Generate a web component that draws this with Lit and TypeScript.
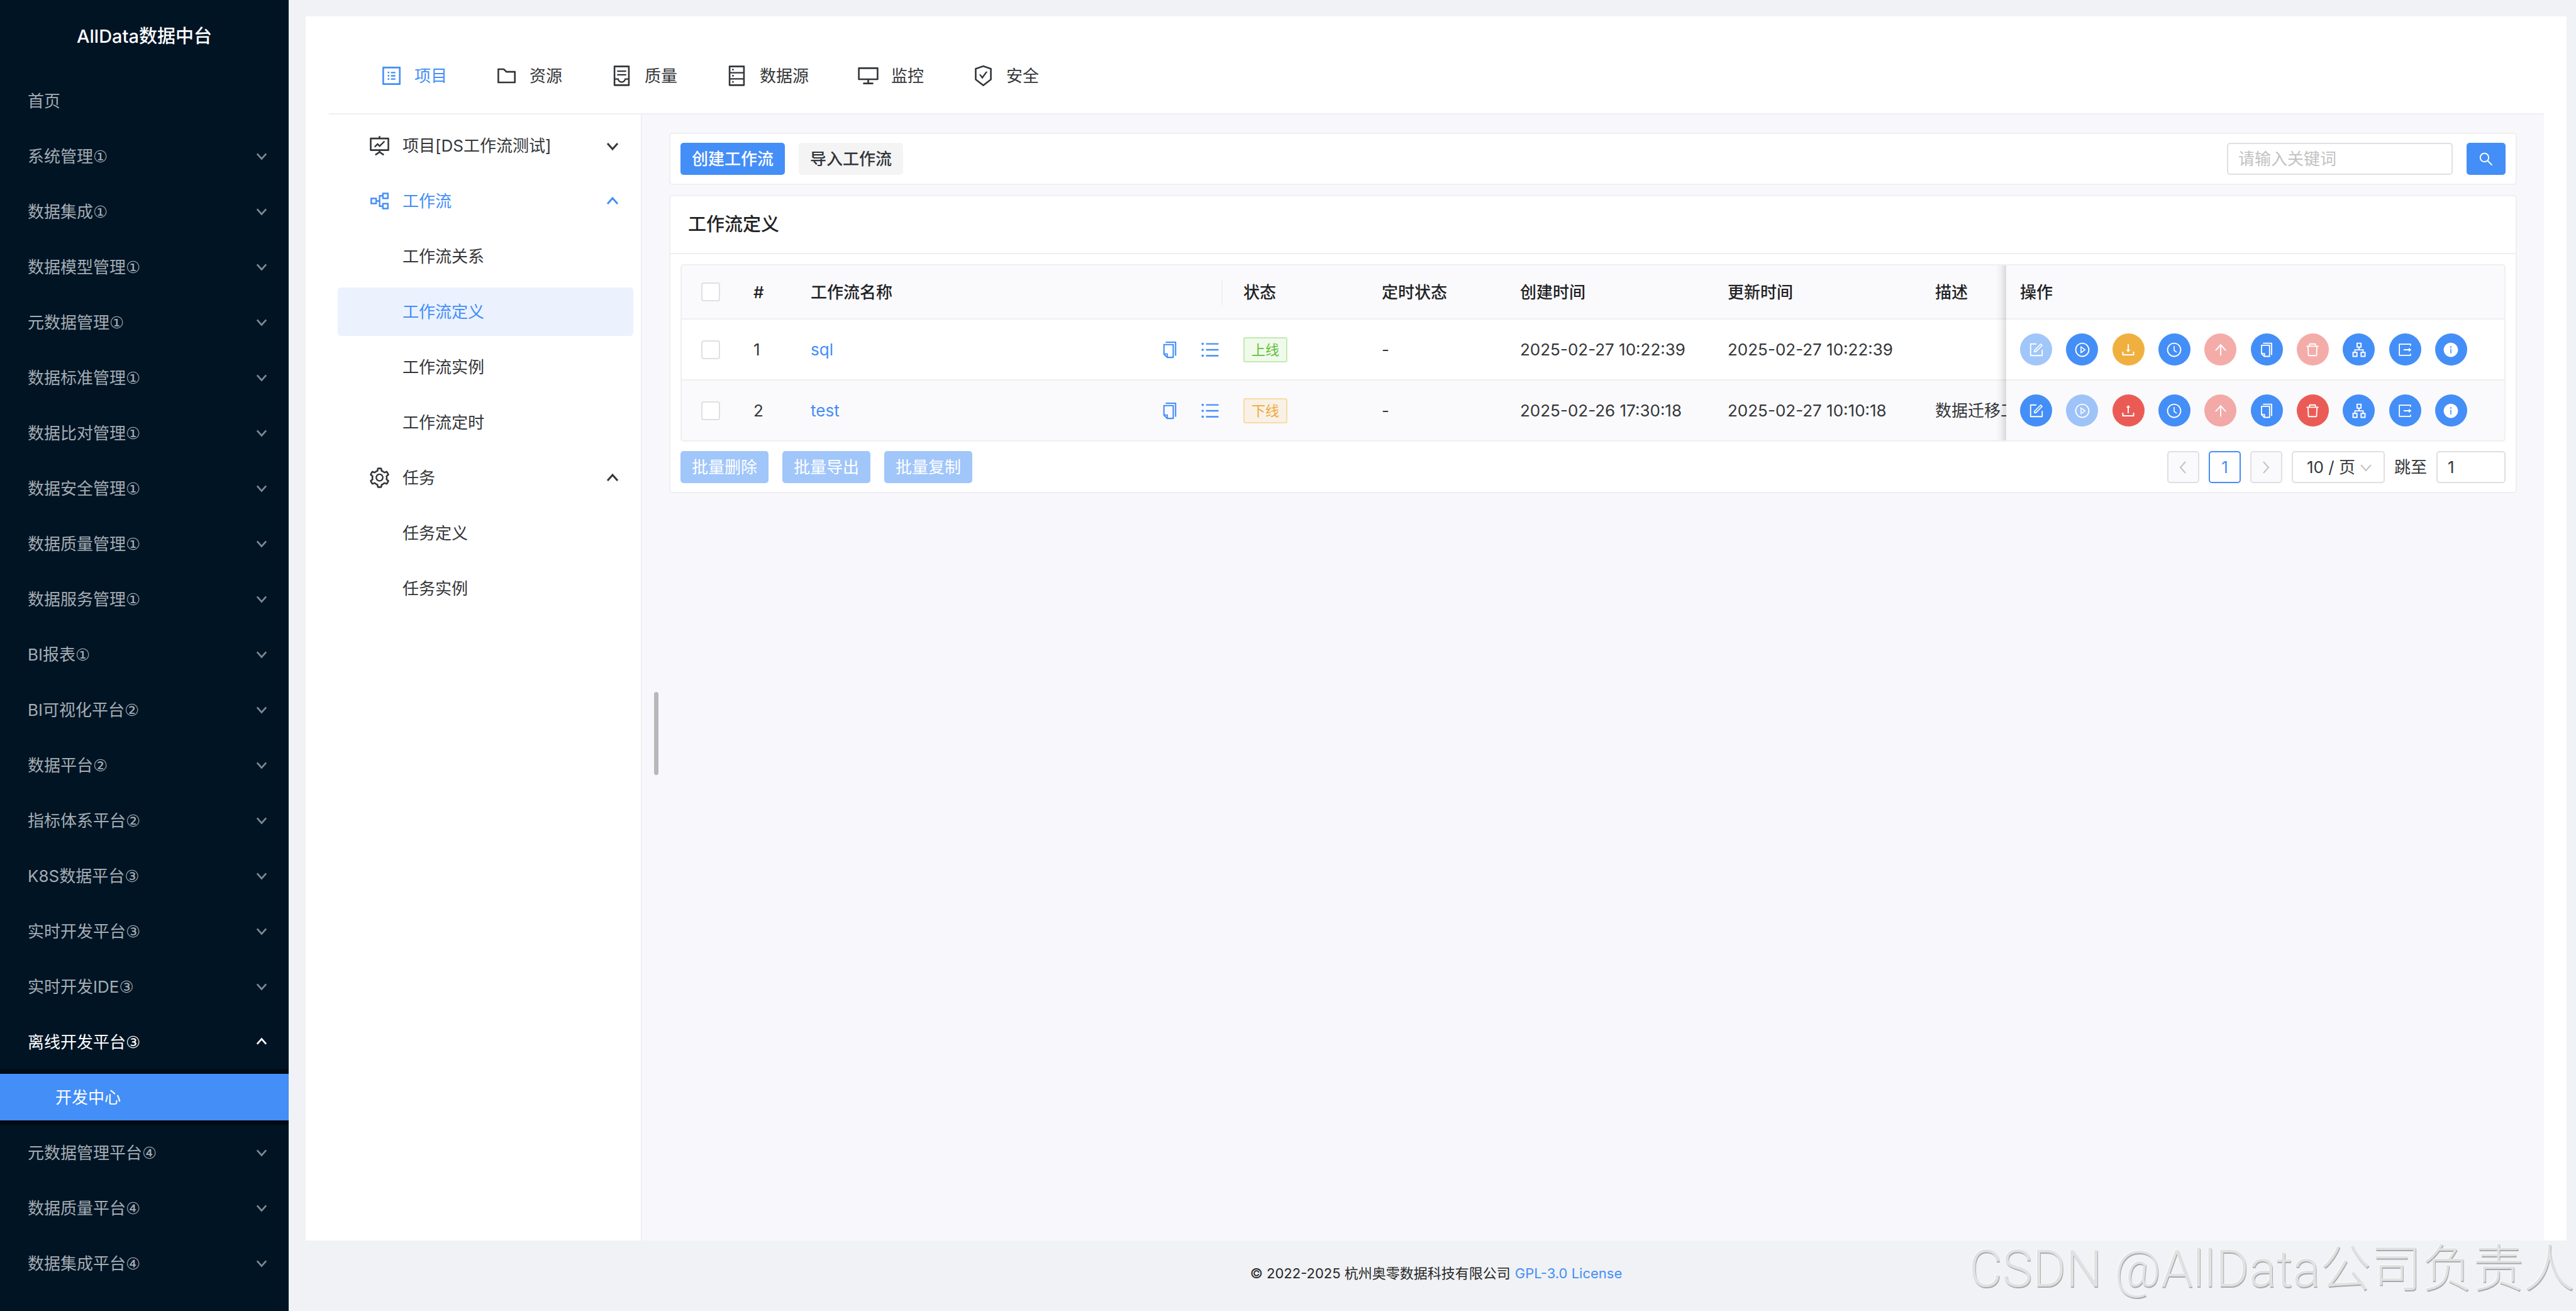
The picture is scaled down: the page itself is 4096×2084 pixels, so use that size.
import { LitElement, html, css, svg } from "lit";
import { customElement, property, state } from "lit/decorators.js";
import { classMap } from "lit/directives/class-map.js";

const CIRCLE =
  "M512 64C264.6 64 64 264.6 64 512s200.6 448 448 448 448-200.6 448-448S759.4 64 512 64zm0 820c-205.4 0-372-166.6-372-372s166.6-372 372-372 372 166.6 372 372-166.6 372-372 372z";
const TRAY =
  "M878 626h-60c-4.4 0-8 3.6-8 8v154H214V634c0-4.4-3.6-8-8-8h-60c-4.4 0-8 3.6-8 8v198c0 17.7 14.3 32 32 32h684c17.7 0 32-14.3 32-32V634c0-4.4-3.6-8-8-8z";

const ICONS: Record<string, string> = {
  profile:
    "M880 112H144c-17.7 0-32 14.3-32 32v736c0 17.7 14.3 32 32 32h736c17.7 0 32-14.3 32-32V144c0-17.7-14.3-32-32-32zm-40 728H184V184h656v656zM492 400h184c4.4 0 8-3.6 8-8v-48c0-4.4-3.6-8-8-8H492c-4.4 0-8 3.6-8 8v48c0 4.4 3.6 8 8 8zm0 144h184c4.4 0 8-3.6 8-8v-48c0-4.4-3.6-8-8-8H492c-4.4 0-8 3.6-8 8v48c0 4.4 3.6 8 8 8zm0 144h184c4.4 0 8-3.6 8-8v-48c0-4.4-3.6-8-8-8H492c-4.4 0-8 3.6-8 8v48c0 4.4 3.6 8 8 8zM340 368a40 40 0 1080 0 40 40 0 10-80 0zm0 144a40 40 0 1080 0 40 40 0 10-80 0zm0 144a40 40 0 1080 0 40 40 0 10-80 0z",
  folder:
    "M880 298.4H521L403.7 186.2a8.15 8.15 0 00-5.5-2.2H144c-17.7 0-32 14.3-32 32v592c0 17.7 14.3 32 32 32h736c17.7 0 32-14.3 32-32V330.4c0-17.7-14.3-32-32-32zM840 768H184V256h188.5l119.6 114.4H840V768z",
  container:
    "M832 64H192c-17.7 0-32 14.3-32 32v832c0 17.7 14.3 32 32 32h640c17.7 0 32-14.3 32-32V96c0-17.7-14.3-32-32-32zm-40 824H232V687h97.9c11.6 32.8 32 62.3 59.1 84.7 34.5 28.5 78.2 44.3 123 44.3s88.5-15.7 123-44.3c27.1-22.4 47.5-51.9 59.1-84.7H792v201zm0-264H643.6l-5.2 24.7C626.4 708.5 573.2 752 512 752s-114.4-43.5-126.5-103.3l-5.2-24.7H232V136h560v488zM320 341h384c4.4 0 8-3.6 8-8v-48c0-4.4-3.6-8-8-8H320c-4.4 0-8 3.6-8 8v48c0 4.4 3.6 8 8 8zm0 160h384c4.4 0 8-3.6 8-8v-48c0-4.4-3.6-8-8-8H320c-4.4 0-8 3.6-8 8v48c0 4.4 3.6 8 8 8z",
  database:
    "M832 64H192c-17.7 0-32 14.3-32 32v832c0 17.7 14.3 32 32 32h640c17.7 0 32-14.3 32-32V96c0-17.7-14.3-32-32-32zm-600 72h560v208H232V136zm560 480H232V408h560v208zm0 272H232V680h560v208zM304 240a40 40 0 1080 0 40 40 0 10-80 0zm0 272a40 40 0 1080 0 40 40 0 10-80 0zm0 272a40 40 0 1080 0 40 40 0 10-80 0z",
  desktop:
    "M928 140H96c-17.7 0-32 14.3-32 32v496c0 17.7 14.3 32 32 32h380v112H304c-8.8 0-16 7.2-16 16v48c0 4.4 3.6 8 8 8h432c4.4 0 8-3.6 8-8v-48c0-8.8-7.2-16-16-16H548V700h380c17.7 0 32-14.3 32-32V172c0-17.7-14.3-32-32-32zm-40 488H136V212h752v416z",
  safety:
    "M866.9 169.9L527.1 54.1C523 52.7 517.5 52 512 52s-11 .7-15.1 2.1L157.1 169.9c-8.3 2.8-15.1 12.4-15.1 21.2v482.4c0 8.8 5.7 20.4 12.6 25.9L499.3 968c3.5 2.7 8 4.1 12.6 4.1s9.2-1.4 12.6-4.1l344.7-268.6c6.9-5.4 12.6-17 12.6-25.9V191.1c.2-8.8-6.6-18.3-14.9-21.2zM810 654.3L512 886.5 214 654.3V226.7l298-101.6 298 101.6v427.6zm-405.8-201c-3-4.1-7.8-6.6-13-6.6H336c-6.5 0-10.3 7.4-6.5 12.7l126.4 174a16.1 16.1 0 0026 0l212.6-292.7c3.8-5.3 0-12.7-6.5-12.7h-55.2c-5.1 0-10 2.5-13 6.6L468.9 542.4l-64.7-89.1z",
  projection:
    "M312.1 591.5c3.1 3.1 8.2 3.1 11.3 0l101.8-101.8 86.1 86.2c3.1 3.1 8.2 3.1 11.3 0l226.3-226.5c3.1-3.1 3.1-8.2 0-11.3l-36.8-36.8a8.03 8.03 0 00-11.3 0L517 485.3l-86.1-86.2a8.03 8.03 0 00-11.3 0L275.3 543.4a8.03 8.03 0 000 11.3l36.8 36.8zM904 160H548V96c0-4.4-3.6-8-8-8h-56c-4.4 0-8 3.6-8 8v64H120c-17.7 0-32 14.3-32 32v520c0 17.7 14.3 32 32 32h356.4v32L311.6 884.1a7.92 7.92 0 00-2.3 11l30.3 47.2v.1c2.4 3.7 7.4 4.7 11.1 2.3L512 838.9l161.3 105.8c3.7 2.4 8.7 1.4 11.1-2.3v-.1l30.3-47.2a8 8 0 00-2.3-11L548 776.3V744h356c17.7 0 32-14.3 32-32V192c0-17.7-14.3-32-32-32zm-40 512H160V232h704v440z",
  partition:
    "M640.6 429.8h257.1c7.9 0 14.3-6.4 14.3-14.3V158.3c0-7.9-6.4-14.3-14.3-14.3H640.6c-7.9 0-14.3 6.4-14.3 14.3v92.9H490.6c-3.9 0-7.1 3.2-7.1 7.1v221.5h-85.7v-96.5c0-7.9-6.4-14.3-14.3-14.3H126.3c-7.9 0-14.3 6.4-14.3 14.3v257.2c0 7.9 6.4 14.3 14.3 14.3h257.1c7.9 0 14.3-6.4 14.3-14.3V544h85.7v221.5c0 3.9 3.2 7.1 7.1 7.1h135.7v92.9c0 7.9 6.4 14.3 14.3 14.3h257.1c7.9 0 14.3-6.4 14.3-14.3v-257c0-7.9-6.4-14.3-14.3-14.3h-257c-7.9 0-14.3 6.4-14.3 14.3v100h-78.6v-393h78.6v100c0 7.9 6.4 14.3 14.3 14.3zm53.5-217.9h150V362h-150V211.9zM329.9 587h-150V437h150v150zm364.2 75.1h150v150.1h-150V662.1z",
  setting:
    "M924.8 625.7l-65.5-56c3.1-19 4.7-38.4 4.7-57.8s-1.6-38.8-4.7-57.8l65.5-56a32.03 32.03 0 009.3-35.2l-.9-2.6a443.74 443.74 0 00-79.7-137.9l-1.8-2.1a32.12 32.12 0 00-35.1-9.5l-81.3 28.9c-30-24.6-63.5-44-99.7-57.6l-15.7-85a32.05 32.05 0 00-25.8-25.7l-2.7-.5c-52.1-9.4-106.9-9.4-159 0l-2.7.5a32.05 32.05 0 00-25.8 25.7l-15.8 85.4a351.86 351.86 0 00-99 57.4l-81.9-29.1a32 32 0 00-35.1 9.5l-1.8 2.1a446.02 446.02 0 00-79.7 137.9l-.9 2.6c-4.5 12.5-.8 26.5 9.3 35.2l66.3 56.6c-3.1 18.8-4.6 38-4.6 57.1 0 19.2 1.5 38.4 4.6 57.1L99 625.5a32.03 32.03 0 00-9.3 35.2l.9 2.6c18.1 50.4 44.9 96.9 79.7 137.9l1.8 2.1a32.12 32.12 0 0035.1 9.5l81.9-29.1c29.8 24.5 63.1 43.9 99 57.4l15.8 85.4a32.05 32.05 0 0025.8 25.7l2.7.5a449.4 449.4 0 00159 0l2.7-.5a32.05 32.05 0 0025.8-25.7l15.7-85a350 350 0 0099.7-57.6l81.3 28.9a32 32 0 0035.1-9.5l1.8-2.1c34.8-41.1 61.6-87.5 79.7-137.9l.9-2.6c4.5-12.3.8-26.3-9.3-35zM788.3 465.9c2.5 15.1 3.8 30.6 3.8 46.1s-1.3 31-3.8 46.1l-6.6 40.1 74.7 63.9a370.03 370.03 0 01-42.6 73.6L721 702.8l-31.4 25.8c-23.9 19.6-50.5 35-79.3 45.8l-38.1 14.3-17.9 97a377.5 377.5 0 01-85 0l-17.9-97.2-37.8-14.5c-28.5-10.8-55-26.2-78.7-45.7l-31.4-25.9-93.4 33.2c-17-22.9-31.2-47.6-42.6-73.6l75.5-64.5-6.5-40c-2.4-14.9-3.7-30.3-3.7-45.5 0-15.3 1.2-30.6 3.7-45.5l6.5-40-75.5-64.5c11.3-26.1 25.6-50.7 42.6-73.6l93.4 33.2 31.4-25.9c23.7-19.5 50.2-34.9 78.7-45.7l37.9-14.3 17.9-97.2c28.1-3.2 56.8-3.2 85 0l17.9 97 38.1 14.3c28.7 10.8 55.4 26.2 79.3 45.8l31.4 25.8 92.8-32.9c17 22.9 31.2 47.6 42.6 73.6L781.8 426l6.5 39.9zM512 326c-97.2 0-176 78.8-176 176s78.8 176 176 176 176-78.8 176-176-78.8-176-176-176zm79.2 255.2A111.6 111.6 0 01512 614c-29.9 0-58-11.7-79.2-32.8A111.6 111.6 0 01400 502c0-29.9 11.7-58 32.8-79.2C454 401.6 482.1 390 512 390c29.9 0 58 11.6 79.2 32.8A111.6 111.6 0 01624 502c0 29.9-11.7 58-32.8 79.2z",
  copy:
    "M832 64H296c-4.4 0-8 3.6-8 8v56c0 4.4 3.6 8 8 8h496v688c0 4.4 3.6 8 8 8h56c4.4 0 8-3.6 8-8V96c0-17.7-14.3-32-32-32zM704 192H192c-17.7 0-32 14.3-32 32v530.7c0 8.5 3.4 16.6 9.4 22.6l173.3 173.3c2.2 2.2 4.7 4 7.4 5.5v1.9h4.2c3.5 1.3 7.2 2 11 2H704c17.7 0 32-14.3 32-32V224c0-17.7-14.3-32-32-32zM350 856.2L263.9 770H350v86.2zM664 888H414V746c0-22.1-17.9-40-40-40H232V264h432v624z",
  list:
    "M912 192H328c-4.4 0-8 3.6-8 8v56c0 4.4 3.6 8 8 8h584c4.4 0 8-3.6 8-8v-56c0-4.4-3.6-8-8-8zm0 284H328c-4.4 0-8 3.6-8 8v56c0 4.4 3.6 8 8 8h584c4.4 0 8-3.6 8-8v-56c0-4.4-3.6-8-8-8zm0 284H328c-4.4 0-8 3.6-8 8v56c0 4.4 3.6 8 8 8h584c4.4 0 8-3.6 8-8v-56c0-4.4-3.6-8-8-8zM104 228a56 56 0 10112 0 56 56 0 10-112 0zm0 284a56 56 0 10112 0 56 56 0 10-112 0zm0 284a56 56 0 10112 0 56 56 0 10-112 0z",
  form:
    "M904 512h-56c-4.4 0-8 3.6-8 8v320H184V184h320c4.4 0 8-3.6 8-8v-56c0-4.4-3.6-8-8-8H144c-17.7 0-32 14.3-32 32v736c0 17.7 14.3 32 32 32h736c17.7 0 32-14.3 32-32V520c0-4.4-3.6-8-8-8zM355.9 534.9L354 653.8c-.1 8.9 7.1 16.2 16 16.2h.4l118-2.9c2-.1 4-.9 5.4-2.3l415.9-415c3.1-3.1 3.1-8.2 0-11.3L785.4 114.3c-1.6-1.6-3.6-2.3-5.7-2.3s-4.1.8-5.7 2.3l-415.8 415a8.3 8.3 0 00-2.3 5.6zm63.5 23.6L779.7 199l45.2 45.1-360.5 359.7-45.7 1.1.7-46.4z",
  play:
    CIRCLE +
    "M719.4 499.1l-296.1-215A15.9 15.9 0 00398 297v430c0 13.1 14.8 20.5 25.3 12.9l296.1-215a15.9 15.9 0 000-25.8zm-257.6 134V390.9L628.5 512 461.8 633.1z",
  download:
    "M505.7 661a8 8 0 0012.6 0l112-141.7c4.1-5.2.4-12.9-6.3-12.9h-74.1V168c0-4.4-3.6-8-8-8h-60c-4.4 0-8 3.6-8 8v338.3H400c-6.7 0-10.4 7.7-6.3 12.9l112 141.8z" +
    TRAY,
  upload:
    "M400 317.7h73.9V656c0 4.4 3.6 8 8 8h60c4.4 0 8-3.6 8-8V317.7H624c6.7 0 10.4-7.7 6.3-12.9L518.3 163a8 8 0 00-12.6 0l-112 141.7c-4.1 5.3-.4 13 6.3 13z" +
    TRAY,
  clock:
    CIRCLE +
    "M686.7 638.6L544.1 535.5V288c0-4.4-3.6-8-8-8H488c-4.4 0-8 3.6-8 8v275.4c0 2.6 1.2 5 3.3 6.5l165.4 120.6c3.6 2.6 8.6 1.8 11.2-1.7l28.6-39c2.6-3.7 1.8-8.7-1.8-11.2z",
  arrowUp:
    "M868 545.5L536.1 163a31.96 31.96 0 00-48.3 0L156 545.5a7.97 7.97 0 006 13.2h81c4.6 0 9-2 12.1-5.5L474 300.9V864c0 4.4 3.6 8 8 8h60c4.4 0 8-3.6 8-8V300.9l218.9 252.3c3 3.5 7.4 5.5 12.1 5.5h81c6.8 0 10.5-8 6-13.2z",
  trash:
    "M360 184h-8c4.4 0 8-3.6 8-8v8h304v-8c0 4.4 3.6 8 8 8h-8v72h72v-80c0-35.3-28.7-64-64-64H352c-35.3 0-64 28.7-64 64v80h72v-72zm504 72H160c-17.7 0-32 14.3-32 32v32c0 4.4 3.6 8 8 8h60.4l24.7 523c1.6 34.1 29.8 61 63.9 61h454c34.2 0 62.3-26.8 63.9-61l24.7-523H888c4.4 0 8-3.6 8-8v-32c0-17.7-14.3-32-32-32zM731.3 840H292.7l-24.2-512h487l-24.2 512z",
  apartment:
    "M908 640H804V488c0-4.4-3.6-8-8-8H548v-96h108c8.8 0 16-7.2 16-16V80c0-8.8-7.2-16-16-16H368c-8.8 0-16 7.2-16 16v288c0 8.8 7.2 16 16 16h108v96H228c-4.4 0-8 3.6-8 8v152H116c-8.8 0-16 7.2-16 16v288c0 8.8 7.2 16 16 16h288c8.8 0 16-7.2 16-16V656c0-8.8-7.2-16-16-16H292v-88h440v88H620c-8.8 0-16 7.2-16 16v288c0 8.8 7.2 16 16 16h288c8.8 0 16-7.2 16-16V656c0-8.8-7.2-16-16-16zm-564 76v168H176V716h168zm84-408V140h168v168H428zm420 576H680V716h168v168z",
  exportOut:
    "M888.3 757.4h-53.8c-4.2 0-7.7 3.5-7.7 7.7v61.8H197.1V197.1h629.8v61.8c0 4.2 3.5 7.7 7.7 7.7h53.8c4.2 0 7.7-3.4 7.7-7.7V158.7c0-17-13.7-30.7-30.7-30.7H158.7c-17 0-30.7 13.7-30.7 30.7v706.6c0 17 13.7 30.7 30.7 30.7h706.6c17 0 30.7-13.7 30.7-30.7V765.1c0-4.3-3.5-7.7-7.7-7.7zm18.6-251.7L765 393.7c-5.3-4.2-13-.4-13 6.3v76H438c-4.4 0-8 3.6-8 8v56c0 4.4 3.6 8 8 8h314v76c0 6.7 7.8 10.5 13 6.3l141.9-112a8 8 0 000-12.6z",
  info:
    "M512 64C264.6 64 64 264.6 64 512s200.6 448 448 448 448-200.6 448-448S759.4 64 512 64zm32 664c0 4.4-3.6 8-8 8h-48c-4.4 0-8-3.6-8-8V456c0-4.4 3.6-8 8-8h48c4.4 0 8 3.6 8 8v272zm-32-344a48.01 48.01 0 010-96 48.01 48.01 0 010 96z",
  search:
    "M909.6 854.5L649.9 594.8C690.2 542.7 712 479 712 412c0-80.2-31.3-155.4-87.9-212.1-56.6-56.7-132-87.9-212.1-87.9s-155.5 31.3-212.1 87.9C143.2 256.5 112 331.8 112 412c0 80.1 31.3 155.5 87.9 212.1C256.5 680.8 331.8 712 412 712c67 0 130.6-21.8 182.7-62l259.7 259.6a8.2 8.2 0 0011.6 0l43.6-43.5a8.2 8.2 0 000-11.6zM570.4 570.4C528 612.7 471.8 636 412 636s-116-23.3-158.4-65.6C211.3 528 188 471.8 188 412s23.3-116.1 65.6-158.4C296 211.3 352.2 188 412 188s116.1 23.2 158.4 65.6S636 352.2 636 412s-23.3 116.1-65.6 158.4z",
};

const icon = (name: string) =>
  html`<svg class="icon" viewBox="0 0 1024 1024" fill="currentColor" aria-hidden="true">
    ${svg`<path d=${ICONS[name]}></path>`}
  </svg>`;

const CHEVRONS: Record<string, string> = {
  down: "M2 6L10 15L18 6",
  up: "M2 14L10 5L18 14",
  left: "M14 1L6 10L14 19",
  right: "M6 1L14 10L6 19",
};

const chevron = (dir: string) =>
  html`<svg class="chevron" viewBox="0 0 20 20" fill="none" stroke="currentColor" aria-hidden="true">
    ${svg`<path d=${CHEVRONS[dir]}></path>`}
  </svg>`;

const base = css`
  *,
  *::before,
  *::after {
    box-sizing: border-box;
  }
  button,
  input,
  select {
    font: inherit;
    color: inherit;
    margin: 0;
    padding: 0;
    border: 0;
    border-radius: 0;
    background: none;
  }
  button {
    cursor: pointer;
  }
  ul {
    list-style: none;
    margin: 0;
    padding: 0;
  }
  a {
    color: inherit;
    text-decoration: none;
  }
  svg {
    display: block;
    flex: none;
  }
`;

interface SideEntry {
  label: string;
  tier?: string;
  leaf?: boolean;
  children?: string[];
}

const SIDE: SideEntry[] = [
  { label: "首页", leaf: true },
  { label: "系统管理", tier: "①" },
  { label: "数据集成", tier: "①" },
  { label: "数据模型管理", tier: "①" },
  { label: "元数据管理", tier: "①" },
  { label: "数据标准管理", tier: "①" },
  { label: "数据比对管理", tier: "①" },
  { label: "数据安全管理", tier: "①" },
  { label: "数据质量管理", tier: "①" },
  { label: "数据服务管理", tier: "①" },
  { label: "BI报表", tier: "①" },
  { label: "BI可视化平台", tier: "②" },
  { label: "数据平台", tier: "②" },
  { label: "指标体系平台", tier: "②" },
  { label: "K8S数据平台", tier: "③" },
  { label: "实时开发平台", tier: "③" },
  { label: "实时开发IDE", tier: "③" },
  { label: "离线开发平台", tier: "③", children: ["开发中心"] },
  { label: "元数据管理平台", tier: "④" },
  { label: "数据质量平台", tier: "④" },
  { label: "数据集成平台", tier: "④" },
];

@customElement("platform-sidebar")
export class PlatformSidebar extends LitElement {
  @state() private open = "离线开发平台";

  static styles = [
    base,
    css`
      :host {
        display: block;
        background: #001424;
        color: #a5adb4;
      }
      .brand {
        margin: 0;
        height: 116px;
        padding-bottom: 1px;
        display: flex;
        align-items: center;
        justify-content: center;
        color: #fff;
        font-size: 29px;
        font-weight: 500;
      }
      .row {
        display: flex;
        align-items: center;
        justify-content: space-between;
        width: 100%;
        height: 74px;
        margin: 7px 0;
        padding: 0 34px 0 44px;
        text-align: left;
      }
      .item {
        display: flow-root;
      }
      .tier {
        font-family: "DejaVu Sans", sans-serif;
        line-height: 1;
      }
      .chevron {
        width: 18px;
        height: 18px;
        stroke-width: 3;
        color: #7f8990;
      }
      .row.open,
      .row.open .chevron {
        color: #fff;
      }
      .sub {
        display: flow-root;
        background: #000a14;
      }
      .row.current {
        padding-left: 88px;
        background: #448ef7;
        color: #fff;
      }
    `,
  ];

  render() {
    return html`
      <h1 class="brand">AllData数据中台</h1>
      <nav aria-label="平台">
        <ul>
          ${SIDE.map((e) => {
            const open = e.label === this.open && !!e.children;
            return html`<li>
              <div class="item">
                ${e.leaf
                  ? html`<a class="row" href="#home">${e.label}</a>`
                  : html`<button
                      class=${classMap({ row: true, open })}
                      aria-expanded=${open ? "true" : "false"}
                      @click=${() => (this.open = open ? "" : e.label)}
                    >
                      <span>${e.label}<span class="tier">${e.tier}</span></span>${chevron(open ? "up" : "down")}
                    </button>`}
              </div>
              ${open
                ? html`<ul class="sub">
                    ${e.children!.map((c) => html`<li><a class="row current" href="#dev" aria-current="page">${c}</a></li>`)}
                  </ul>`
                : ""}
            </li>`;
          })}
        </ul>
      </nav>
    `;
  }
}

const TABS = [
  ["profile", "项目"],
  ["folder", "资源"],
  ["container", "质量"],
  ["database", "数据源"],
  ["desktop", "监控"],
  ["safety", "安全"],
];

@customElement("top-menu")
export class TopMenu extends LitElement {
  static styles = [
    base,
    css`
      :host {
        display: block;
        border-bottom: 2px solid #efeff2;
      }
      .tabs {
        display: flex;
        align-items: center;
        gap: 76px;
        height: 117px;
        padding: 0 81px 3px;
      }
      .tab {
        display: flex;
        align-items: center;
        gap: 18px;
      }
      .tab.active {
        color: #448ef7;
      }
      .icon {
        width: 37px;
        height: 37px;
      }
    `,
  ];

  render() {
    return html`<nav class="tabs" aria-label="主菜单">
      ${TABS.map(
        ([name, label], i) =>
          html`<a class=${classMap({ tab: true, active: i === 0 })} href="#${name}">${icon(name)}${label}</a>`
      )}
    </nav>`;
  }
}

const GROUPS = [
  { icon: "projection", label: "项目[DS工作流测试]", open: false, active: false, items: [] as string[] },
  {
    icon: "partition",
    label: "工作流",
    open: true,
    active: true,
    items: ["工作流关系", "工作流定义", "工作流实例", "工作流定时"],
  },
  { icon: "setting", label: "任务", open: true, active: false, items: ["任务定义", "任务实例"] },
];

@customElement("side-menu")
export class SideMenu extends LitElement {
  @state() private selected = "工作流定义";

  static styles = [
    base,
    css`
      :host {
        display: block;
        border-right: 2px solid #efeff2;
        background: #fff;
        padding: 0 12px 0 14px;
      }
      .row {
        display: flex;
        align-items: center;
        width: 100%;
        height: 77px;
        margin-top: 11px;
        padding: 0 23px 0 48px;
        gap: 18px;
        border-radius: 5px;
        text-align: left;
      }
      li {
        display: flow-root;
      }
      .label {
        flex: 1;
      }
      .leaf {
        padding-left: 103px;
      }
      .active {
        color: #448ef7;
      }
      .selected {
        background: #ebf2fe;
        color: #448ef7;
      }
      .icon {
        width: 37px;
        height: 37px;
      }
      .chevron {
        width: 20px;
        height: 20px;
        stroke-width: 3;
      }
    `,
  ];

  render() {
    return html`<nav aria-label="项目菜单">
      <ul>
        ${GROUPS.map(
          (g) => html`<li>
            <button class=${classMap({ row: true, active: g.active })} aria-expanded=${g.open ? "true" : "false"}>
              ${icon(g.icon)}<span class="label">${g.label}</span>${chevron(g.open ? "up" : "down")}
            </button>
            ${g.items.length
              ? html`<ul>
                  ${g.items.map(
                    (it) => html`<li>
                      <a
                        class=${classMap({ row: true, leaf: true, selected: it === this.selected })}
                        href="#"
                        @click=${(ev: Event) => {
                          ev.preventDefault();
                          this.selected = it;
                        }}
                        >${it}</a
                      >
                    </li>`
                  )}
                </ul>`
              : ""}
          </li>`
        )}
      </ul>
    </nav>`;
  }
}

interface Action {
  icon: string;
  label: string;
  tone?: string;
  off?: boolean;
}
interface Flow {
  id: number;
  name: string;
  online: boolean;
  created: string;
  updated: string;
  note: string;
}

const FLOWS: Flow[] = [
  { id: 1, name: "sql", online: true, created: "2025-02-27 10:22:39", updated: "2025-02-27 10:22:39", note: "" },
  { id: 2, name: "test", online: false, created: "2025-02-26 17:30:18", updated: "2025-02-27 10:10:18", note: "数据迁移工" },
];

const actionsFor = (f: Flow): Action[] => [
  { icon: "form", label: "编辑", off: f.online },
  { icon: "play", label: "运行", off: !f.online },
  f.online ? { icon: "download", label: "下线", tone: "warn" } : { icon: "upload", label: "上线", tone: "danger" },
  { icon: "clock", label: "定时" },
  { icon: "arrowUp", label: "定时上线", tone: "danger", off: true },
  { icon: "copy", label: "复制" },
  { icon: "trash", label: "删除", tone: "danger", off: f.online },
  { icon: "apartment", label: "树形图" },
  { icon: "exportOut", label: "导出" },
  { icon: "info", label: "版本信息" },
];

@customElement("flow-table")
export class FlowTable extends LitElement {
  @property({ attribute: false }) flows: Flow[] = [];

  static styles = [
    base,
    css`
      :host {
        display: block;
        border: 2px solid #efeff2;
        border-radius: 5px;
        overflow: hidden;
      }
      .scroll {
        overflow-x: auto;
        scrollbar-width: none;
      }
      table {
        width: calc(100% + 105px);
        table-layout: fixed;
        border-collapse: separate;
        border-spacing: 0;
      }
      .c-check {
        width: 92px;
      }
      .c-index {
        width: 91px;
      }
      .c-state {
        width: 220px;
      }
      .c-time {
        width: 330px;
      }
      .c-note {
        width: 240px;
      }
      .c-ops {
        width: 792px;
      }
      th,
      td {
        height: 97px;
        padding: 0 22px;
        text-align: left;
        white-space: nowrap;
        border-bottom: 2px solid #efeff2;
        background: #fff;
      }
      th {
        height: 86px;
        font-weight: 500;
        color: #1f2225;
        background: #fafafc;
      }
      tbody tr:nth-child(even) td {
        background: #fafafc;
      }
      tbody tr:last-child td {
        height: 95px;
        border-bottom: 0;
      }
      th.check,
      td.check {
        padding: 0 31px;
      }
      .box {
        appearance: none;
        display: block;
        width: 30px;
        height: 30px;
        border: 2px solid #e0e0e4;
        border-radius: 4px;
        background: #fff;
      }
      th.name {
        padding-right: 11px;
      }
      .split {
        display: flex;
        align-items: center;
        justify-content: space-between;
      }
      .grip {
        width: 2px;
        height: 41px;
        background: #efeff2;
      }
      .link {
        color: #448ef7;
      }
      .tools {
        display: flex;
        align-items: center;
        gap: 32px;
        color: #448ef7;
      }
      td.name {
        padding-right: 14px;
      }
      .tools .copy .icon {
        width: 30px;
        height: 30px;
      }
      .tools .list .icon {
        width: 34px;
        height: 34px;
      }
      .tag {
        display: inline-flex;
        align-items: center;
        height: 40px;
        padding: 0 11px;
        border: 2px solid #c3e9b2;
        border-radius: 3px;
        background: #effaea;
        color: #63bf3c;
        font-size: 22px;
      }
      .tag.off {
        border-color: #f8dba6;
        background: #f9f1e5;
        color: #f0a93c;
      }
      th.ops,
      td.ops {
        position: sticky;
        right: 0;
        overflow: visible;
      }
      .ops::before {
        content: "";
        position: absolute;
        top: 0;
        bottom: -2px;
        right: 100%;
        width: 16px;
        background: linear-gradient(to left, rgba(0, 0, 0, 0.13), rgba(0, 0, 0, 0.03) 60%, rgba(0, 0, 0, 0));
        pointer-events: none;
      }
      .actions {
        display: flex;
        justify-content: space-between;
        max-width: 711px;
      }
      .act {
        display: flex;
        align-items: center;
        justify-content: center;
        width: 51px;
        height: 51px;
        border-radius: 50%;
        background: #448ef7;
        color: #fff;
      }
      .act .icon {
        width: 26px;
        height: 26px;
      }
      .act.warn {
        background: #f0b040;
      }
      .act.danger {
        background: #eb5b55;
      }
      .act:disabled {
        opacity: 0.5;
      }
    `,
  ];

  render() {
    return html`<div class="scroll">
      <table>
        <colgroup>
          <col class="c-check" />
          <col class="c-index" />
          <col />
          <col class="c-state" />
          <col class="c-state" />
          <col class="c-time" />
          <col class="c-time" />
          <col class="c-note" />
          <col class="c-ops" />
        </colgroup>
        <thead>
          <tr>
            <th class="check"><input class="box" type="checkbox" aria-label="全选" /></th>
            <th>#</th>
            <th class="name">
              <div class="split">工作流名称<span class="grip"></span></div>
            </th>
            <th>状态</th>
            <th>定时状态</th>
            <th>创建时间</th>
            <th>更新时间</th>
            <th>描述</th>
            <th class="ops">操作</th>
          </tr>
        </thead>
        <tbody>
          ${this.flows.map(
            (f) => html`<tr>
              <td class="check"><input class="box" type="checkbox" aria-label=${f.name} /></td>
              <td>${f.id}</td>
              <td class="name">
                <div class="split">
                  <a class="link" href="#${f.name}">${f.name}</a>
                  <span class="tools">
                    <button class="copy" aria-label="复制名称">${icon("copy")}</button>
                    <button class="list" aria-label="查看列表">${icon("list")}</button>
                  </span>
                </div>
              </td>
              <td><span class=${classMap({ tag: true, off: !f.online })}>${f.online ? "上线" : "下线"}</span></td>
              <td>-</td>
              <td>${f.created}</td>
              <td>${f.updated}</td>
              <td>${f.note}</td>
              <td class="ops">
                <div class="actions">
                  ${actionsFor(f).map(
                    (a) => html`<button
                      class=${classMap({ act: true, warn: a.tone === "warn", danger: a.tone === "danger" })}
                      aria-label=${a.label}
                      ?disabled=${!!a.off}
                    >
                      ${icon(a.icon)}
                    </button>`
                  )}
                </div>
              </td>
            </tr>`
          )}
        </tbody>
      </table>
    </div>`;
  }
}

@customElement("flow-page")
export class FlowPage extends LitElement {
  static styles = [
    base,
    css`
      :host {
        display: flex;
        flex-direction: column;
        gap: 16px;
        padding: 29px 43px;
        background: #f8f8fc;
      }
      .card {
        border: 2px solid #efeff2;
        border-radius: 5px;
        background: #fff;
      }
      .bar {
        display: flex;
        align-items: center;
        justify-content: space-between;
        padding: 14px 16px;
      }
      .group {
        display: flex;
        align-items: center;
        gap: 22px;
      }
      .btn {
        height: 51px;
        padding: 0 18px;
        border-radius: 5px;
        background: #448ef7;
        color: #fff;
      }
      .btn.plain {
        background: #f4f4f5;
        color: #333639;
      }
      .btn.strong {
        font-weight: 500;
      }
      .btn:disabled {
        opacity: 0.5;
      }
      .btn .icon {
        width: 26px;
        height: 26px;
      }
      .field {
        height: 51px;
        padding: 0 16px;
        border: 2px solid #e0e0e4;
        border-radius: 5px;
        background: #fff;
      }
      .field::placeholder {
        color: #c2c2c2;
        opacity: 1;
      }
      .search {
        width: 359px;
      }
      .title {
        display: flex;
        align-items: center;
        height: 92px;
        margin: 0;
        padding: 0 28px;
        border-bottom: 2px solid #efeff2;
        color: #1f2225;
        font-size: 29px;
        font-weight: 500;
      }
      .body {
        padding: 16px 16px 14px;
      }
      .foot {
        display: flex;
        align-items: center;
        justify-content: space-between;
        margin-top: 15px;
      }
      .pager {
        display: flex;
        align-items: center;
        gap: 15px;
      }
      .page {
        display: flex;
        align-items: center;
        justify-content: center;
        width: 51px;
        height: 51px;
        border: 2px solid #448ef7;
        border-radius: 5px;
        color: #448ef7;
      }
      .page:disabled {
        border-color: #e0e0e4;
        background: #fafafc;
        color: #c2c2c2;
      }
      .chevron {
        width: 20px;
        height: 20px;
        stroke-width: 2;
      }
      .pick {
        display: grid;
        align-items: center;
        width: 148px;
      }
      .pick > * {
        grid-area: 1 / 1;
      }
      .pick .size {
        appearance: none;
        width: 100%;
        padding: 0 0 0 22px;
      }
      .pick .chevron {
        justify-self: end;
        margin-right: 20px;
        color: #c2c2c2;
        pointer-events: none;
      }
      .jump {
        display: flex;
        align-items: center;
        gap: 15px;
      }
      .goto {
        width: 110px;
      }
    `,
  ];

  render() {
    return html`
      <section class="card bar">
        <div class="group">
          <button class="btn strong">创建工作流</button>
          <button class="btn plain strong">导入工作流</button>
        </div>
        <div class="group">
          <input class="field search" type="text" placeholder="请输入关键词" aria-label="请输入关键词" />
          <button class="btn" aria-label="搜索">${icon("search")}</button>
        </div>
      </section>
      <section class="card">
        <h2 class="title">工作流定义</h2>
        <div class="body">
          <flow-table .flows=${FLOWS}></flow-table>
          <div class="foot">
            <div class="group">
              <button class="btn" disabled>批量删除</button>
              <button class="btn" disabled>批量导出</button>
              <button class="btn" disabled>批量复制</button>
            </div>
            <div class="pager">
              <button class="page" disabled aria-label="上一页">${chevron("left")}</button>
              <button class="page" aria-current="page">1</button>
              <button class="page" disabled aria-label="下一页">${chevron("right")}</button>
              <span class="pick">
                <select class="field size" aria-label="每页条数">
                  <option>10 / 页</option>
                </select>
                ${chevron("down")}
              </span>
              <label class="jump">跳至<input class="field goto" type="text" .value=${"1"} /></label>
            </div>
          </div>
        </div>
      </section>
    `;
  }
}

@customElement("app-root")
export class AppRoot extends LitElement {
  static styles = [
    base,
    css`
      :host {
        position: relative;
        display: flex;
        min-height: 100vh;
        overflow: hidden;
        background: #f0f2f5;
        color: #333639;
        font-family: Inter, "Noto Sans CJK SC", sans-serif;
        font-size: 26px;
        line-height: 1.5;
      }
      platform-sidebar {
        flex: 0 0 459px;
      }
      .main {
        flex: 1;
        min-width: 0;
        display: flex;
        flex-direction: column;
        padding: 26px 15px 0 27px;
      }
      .panel {
        flex: 1;
        display: flex;
        flex-direction: column;
        padding: 37px 36px 0 37px;
        background: #fff;
      }
      .work {
        flex: 1;
        display: flex;
      }
      side-menu {
        flex: 0 0 498px;
      }
      flow-page {
        flex: 1;
        min-width: 0;
      }
      .handle {
        position: absolute;
        left: 1040px;
        top: 1100px;
        width: 7px;
        height: 132px;
        border-radius: 4px;
        background: #b8b8b9;
      }
      .footer {
        display: flex;
        align-items: center;
        justify-content: center;
        gap: 7px;
        height: 112px;
        padding-bottom: 7px;
        color: #262626;
        font-size: 22px;
      }
      .footer a {
        color: #448ef7;
      }
      .mark {
        position: absolute;
        right: 2px;
        bottom: 6px;
        color: #e0e2e1;
        font-family: Roboto, "Noto Sans CJK SC", sans-serif;
        font-size: 81px;
        font-weight: 300;
        line-height: 120px;
        white-space: nowrap;
        text-shadow: 1px 2px 0 #a9aaac, -1px -1px 0 #fafbfb;
        pointer-events: none;
      }
    `,
  ];

  render() {
    return html`
      <platform-sidebar></platform-sidebar>
      <main class="main">
        <div class="panel">
          <top-menu></top-menu>
          <div class="work">
            <side-menu></side-menu>
            <flow-page></flow-page>
          </div>
        </div>
        <footer class="footer">
          <span>© 2022-2025 杭州奥零数据科技有限公司</span>
          <a href="#license">GPL-3.0 License</a>
        </footer>
      </main>
      <div class="handle"></div>
      <div class="mark">CSDN @AllData公司负责人</div>
    `;
  }
}
